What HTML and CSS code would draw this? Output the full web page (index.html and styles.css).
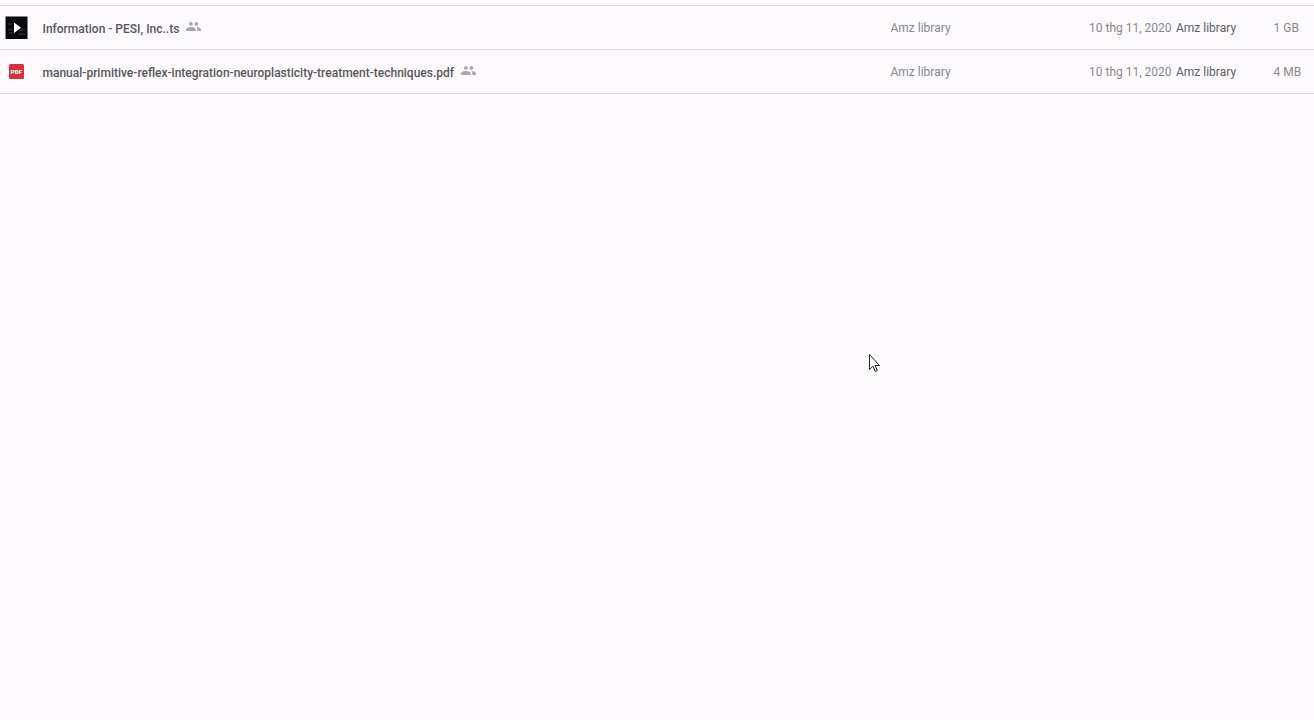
FILE: index.html
```
<!DOCTYPE html>
<html lang="vi">
<head>
    <meta charset="utf-8">
    <title>Drive</title>
    <link rel="stylesheet" href="styles.css">
</head>
<body>
    <div class="file-list">
        <div class="row">
            <div class="icon">
                <svg width="23" height="23" viewBox="0 0 23 23">
                    <rect x=".5" y=".5" width="22" height="22.500" fill="#09080b"/>
                    <path d="M3 8h4M3 13.500h5M14 14h6M4 17h5M13 18h7" stroke="#242227" stroke-width="2"/>
                    <path d="M9 6.500v10.500l7-5.250z" fill="#fff"/>
                </svg>
            </div>
            <div class="name">
                <span>Information - PESI, Inc..ts</span>
                <svg class="shared" width="15" height="9" viewBox="0 0 15 9">
                    <circle cx="4.900" cy="1.900" r="1.900"/>
                    <circle cx="10.400" cy="1.900" r="1.900"/>
                    <path d="M0 9V7.500C0 5.900 3 5 4.900 5s4.900.9 4.900 2.500V9zM11.300 9V7.500c0-1.100-.6-1.900-1.300-2.500 2.100-.1 5 .9 5 2.500V9z"/>
                </svg>
            </div>
            <div class="owner">Amz library</div>
            <div class="modified">10 thg 11, 2020 <span class="who">Amz library</span></div>
            <div class="size">1 GB</div>
        </div>
        <div class="row">
            <div class="icon">
                <svg class="pdf" width="15" height="15" viewBox="0 0 15 15">
                    <rect width="15" height="15" rx="1.500" fill="#d9303c"/>
                    <text x="7.500" y="9.900" text-anchor="middle">PDF</text>
                </svg>
            </div>
            <div class="name">
                <span>manual-primitive-reflex-integration-neuroplasticity-treatment-techniques.pdf</span>
                <svg class="shared" width="15" height="9" viewBox="0 0 15 9">
                    <circle cx="4.900" cy="1.900" r="1.900"/>
                    <circle cx="10.400" cy="1.900" r="1.900"/>
                    <path d="M0 9V7.500C0 5.900 3 5 4.900 5s4.900.9 4.900 2.500V9zM11.300 9V7.500c0-1.100-.6-1.900-1.300-2.500 2.100-.1 5 .9 5 2.500V9z"/>
                </svg>
            </div>
            <div class="owner">Amz library</div>
            <div class="modified">10 thg 11, 2020 <span class="who">Amz library</span></div>
            <div class="size">4 MB</div>
        </div>
    </div>

    <svg class="cursor" width="12" height="19" viewBox="0 0 12 19">
        <path d="M.5.5v15l3.500-3.300 2.300 5.300 2-.9-2.200-5.100h4.400z" fill="#fff" stroke="#222"/>
    </svg>
</body>
</html>
```

FILE: styles.css
```
body {
    margin: 0;
    background: #fdfbfe;
    font-family: Roboto, Arial, sans-serif;
    font-size: 12px;
    color: #89878b;
}

.file-list {
    margin-top: 5px;
    border-top: 1px solid #dddbde;
}

.row {
    display: grid;
    grid-template-columns: 33px 848px 198px 185px 1fr;
    align-items: center;
    height: 43px;
    border-bottom: 1px solid #d8d6d9;
    white-space: nowrap;
}

.icon {
    display: flex;
    justify-content: center;
}

.pdf text {
    font-size: 6.2px;
    font-weight: 900;
    fill: #fff;
}

.name {
    display: flex;
    align-items: center;
    padding-top: 2px;
    padding-left: 9.5px;
    font-weight: 500;
    color: #58565a;
}

.shared {
    margin-left: 6.5px;
    margin-bottom: 4px;
    fill: #a9a7ab;
}

.owner {
    padding-left: 9.5px;
}

.modified {
    padding-left: 10px;
}

.who {
    margin-left: 1.5px;
    color: #605e62;
}

.size {
    padding-left: 9.5px;
}

/* mouse pointer over the list */
.cursor {
    position: absolute;
    left: 869px;
    top: 354px;
}
```
